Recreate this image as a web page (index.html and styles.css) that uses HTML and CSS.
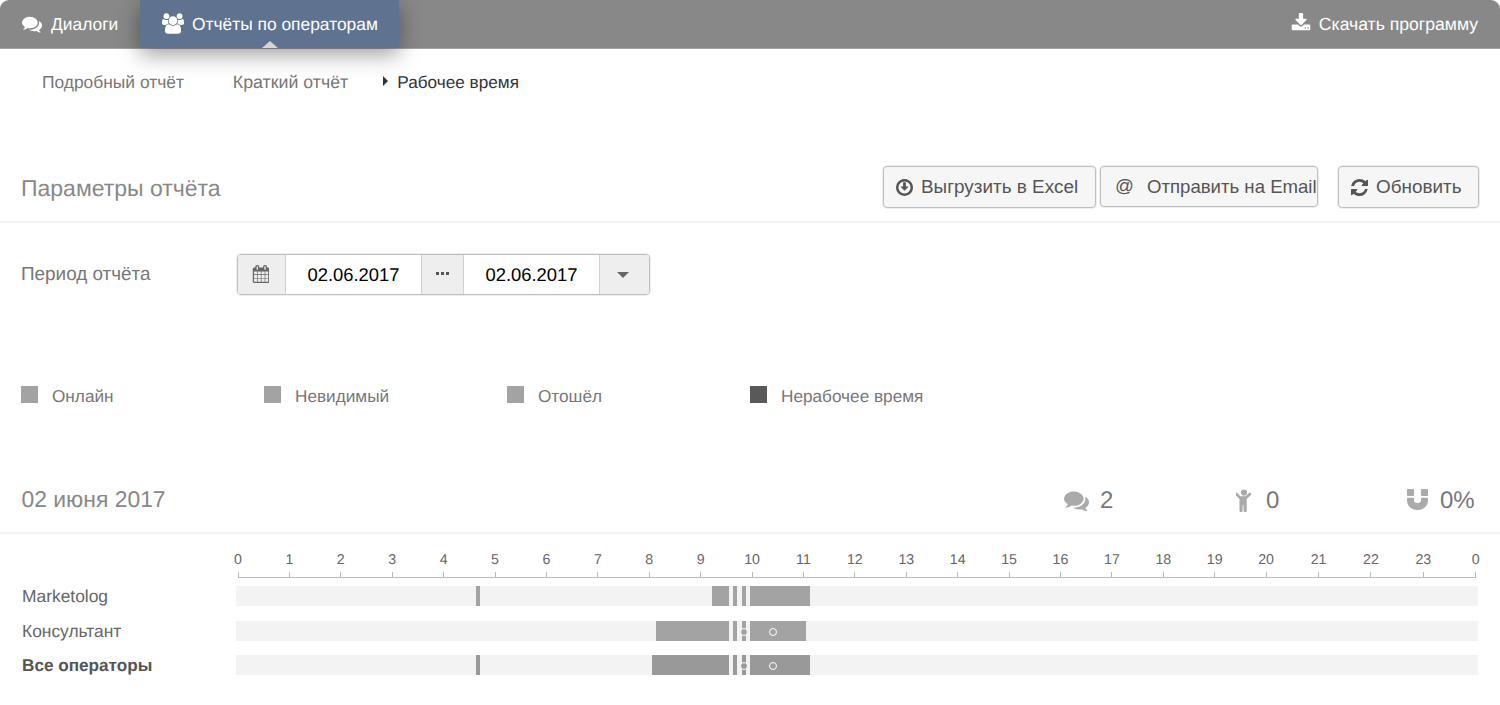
FILE: index.html
```html
<!DOCTYPE html>
<html lang="ru">
<head>
<meta charset="utf-8">
<title>Рабочее время</title>
<link rel="stylesheet" href="styles.css">
</head>
<body>
<header class="topbar">
  <nav class="tabs">
    <a class="tab">
      <svg class="ic ic-comments" viewBox="0 0 1792 1792"><path d="M1408 768q0 139-94 257t-256.500 186.500-353.500 68.500q-86 0-176-16-124 88-278 128-36 9-86 16h-3q-11 0-20.500-8t-11.500-21q-1-3-1-6.500t.5-6.500 2-6l2.500-5 3.500-5.500 4-5 4.500-5 4-4.500q5-6 23-25t26-29.500 22.500-29 25-38.500 20.500-44q-124-72-195-177t-71-224q0-139 94-257t256.500-186.500 353.500-68.500 353.500 68.500 256.500 186.500 94 257zm384 256q0 120-71 224.500t-195 176.500q10 24 20.500 44t25 38.500 22.500 29 26 29.500 23 25q1 1 4 4.500t4.500 5 4 5 3.500 5.500l2.500 5 2 6 .5 6.500-1 6.500q-3 14-13 22t-22 7q-50-7-86-16-154-40-278-128-90 16-176 16-271 0-472-132 58 4 88 4 161 0 309-45t264-129q125-92 192-212t67-254q0-77-23-152 129 71 204 178t75 230z"/></svg>
      Диалоги
    </a>
    <a class="tab tab-active">
      <svg class="ic ic-users" viewBox="0 0 1920 1792"><path d="M593 896q-162 5-265 128h-134q-82 0-138-40.500t-56-118.500q0-353 124-353 6 0 43.500 21t97.500 42.500 119 21.500q67 0 133-23-5 37-5 66 0 139 81 256zm1071 637q0 120-73 189.500t-194 69.500h-874q-121 0-194-69.500t-73-189.500q0-53 3.500-103.500t14-109 26.500-108.500 43-97.500 62-81 85.500-53.500 111.500-20q10 0 43 21.500t73 48 107 48 135 21.500 135-21.500 107-48 73-48 43-21.500q61 0 111.500 20t85.500 53.500 62 81 43 97.500 26.500 108.500 14 109 3.500 103.500zm-1024-1277q0 106-75 181t-181 75-181-75-75-181 75-181 181-75 181 75 75 181zm704 384q0 159-112.500 271.500t-271.500 112.500-271.500-112.500-112.500-271.500 112.500-271.500 271.500-112.500 271.500 112.500 112.500 271.500zm576 225q0 78-56 118.500t-138 40.500h-134q-103-123-265-128 81-117 81-256 0-29-5-66 66 23 133 23 59 0 119-21.500t97.500-42.500 43.500-21q124 0 124 353zm-128-609q0 106-75 181t-181 75-181-75-75-181 75-181 181-75 181 75 75 181z"/></svg>
      Отчёты по операторам
    </a>
  </nav>
  <a class="download">
    <svg class="ic ic-download" viewBox="0 0 1792 1792"><path d="M1344 1344q0-26-19-45t-45-19-45 19-19 45 19 45 45 19 45-19 19-45zm256 0q0-26-19-45t-45-19-45 19-19 45 19 45 45 19 45-19 19-45zm128-224v320q0 40-28 68t-68 28h-1472q-40 0-68-28t-28-68v-320q0-40 28-68t68-28h465l135 136q58 56 136 56t136-56l136-136h464q40 0 68 28t28 68zm-325-569q17 41-14 70l-448 448q-18 19-45 19t-45-19l-448-448q-31-29-14-70 17-39 59-39h256v-448q0-26 19-45t45-19h256q26 0 45 19t19 45v448h256q42 0 59 39z"/></svg>
    Скачать программу
  </a>
</header>

<nav class="subnav">
  <a class="subnav-item">Подробный отчёт</a>
  <a class="subnav-item">Краткий отчёт</a>
  <a class="subnav-item subnav-current">Рабочее время</a>
</nav>

<section class="params-head">
  <h2 class="section-title">Параметры отчёта</h2>
  <div class="actions">
    <button class="btn btn-excel"><svg class="ic ic-btn" viewBox="0 -32 1536 1536"><path d="M1120 672q0 12-10 24l-319 319q-11 9-23 9t-23-9l-320-320q-15-16-7-35 8-20 30-20h192v-352q0-14 9-23t23-9h192q14 0 23 9t9 23v352h192q14 0 23 9t9 23zm-352-480q-148 0-273 73t-198 198-73 273 73 273 198 198 273 73 273-73 198-198 73-273-73-273-198-198-273-73zm768 544q0 209-103 385.500t-279.500 279.500-385.500 103-385.500-103-279.500-279.500-103-385.500 103-385.500 279.500-279.500 385.500-103 385.500 103 279.500 279.500 103 385.500z"/></svg>Выгрузить в Excel</button>
    <button class="btn btn-email"><span class="at">@</span>Отправить на Email</button>
    <button class="btn btn-refresh"><svg class="ic ic-btn" viewBox="128 128 1536 1536"><path d="M1639 1056q0 5-1 7-64 268-268 434.500t-478 166.500q-146 0-282.500-55t-243.500-157l-129 129q-19 19-45 19t-45-19-19-45v-448q0-26 19-45t45-19h448q26 0 45 19t19 45-19 45l-137 137q71 66 161 102t187 36q134 0 250-65t186-179q11-17 53-117 8-23 30-23h192q13 0 22.500 9.500t9.500 22.500zm25-800v448q0 26-19 45t-45 19h-448q-26 0-45-19t-19-45 19-45l138-138q-148-137-349-137-134 0-250 65t-186 179q-11 17-53 117-8 23-30 23h-199q-13 0-22.500-9.500t-9.500-22.500v-7q65-268 270-434.500t480-166.500q146 0 284 55.500t245 156.500l130-129q19-19 45-19t45 19 19 45z"/></svg>Обновить</button>
  </div>
</section>

<section class="period">
  <label class="period-label">Период отчёта</label>
  <div class="range">
    <span class="addon addon-cal"><svg class="ic ic-cal" viewBox="0 0 1664 1792"><path d="M192 1664h288v-288h-288v288zm352 0h320v-288h-320v288zm-352-352h288v-320h-288v320zm352 0h320v-320h-320v320zm-352-384h288v-288h-288v288zm736 736h320v-288h-320v288zm-384-736h320v-288h-320v288zm768 736h288v-288h-288v288zm-384-352h320v-320h-320v320zm-352-864v-288q0-13-9.500-22.500t-22.500-9.500h-64q-13 0-22.500 9.500t-9.500 22.500v288q0 13 9.500 22.500t22.500 9.500h64q13 0 22.500-9.500t9.500-22.500zm736 864h288v-320h-288v320zm-384-384h320v-288h-320v288zm384 0h288v-288h-288v288zm32-480v-288q0-13-9.500-22.500t-22.500-9.500h-64q-13 0-22.500 9.500t-9.500 22.500v288q0 13 9.500 22.500t22.500 9.500h64q13 0 22.500-9.500t9.500-22.500zm384-64v1280q0 52-38 90t-90 38h-1408q-52 0-90-38t-38-90v-1280q0-52 38-90t90-38h128v-96q0-66 47-113t113-47h64q66 0 113 47t47 113v96h384v-96q0-66 47-113t113-47h64q66 0 113 47t47 113v96h128q52 0 90 38t38 90z"/></svg></span>
    <span class="date">02.06.2017</span>
    <span class="addon addon-dots"><i></i><i></i><i></i></span>
    <span class="date">02.06.2017</span>
    <span class="addon addon-caret"><b class="caret-down"></b></span>
  </div>
</section>

<section class="legend">
  <div class="legend-item"><span class="swatch"></span>Онлайн</div>
  <div class="legend-item"><span class="swatch"></span>Невидимый</div>
  <div class="legend-item"><span class="swatch"></span>Отошёл</div>
  <div class="legend-item"><span class="swatch swatch-dark"></span>Нерабочее время</div>
</section>

<section class="day-head">
  <h2 class="day-title">02 июня 2017</h2>
  <div class="stat stat-a"><svg class="ic ic-stat" viewBox="0 0 1792 1792"><path d="M1408 768q0 139-94 257t-256.500 186.500-353.500 68.500q-86 0-176-16-124 88-278 128-36 9-86 16h-3q-11 0-20.500-8t-11.500-21q-1-3-1-6.500t.5-6.500 2-6l2.500-5 3.500-5.500 4-5 4.500-5 4-4.500q5-6 23-25t26-29.500 22.500-29 25-38.500 20.500-44q-124-72-195-177t-71-224q0-139 94-257t256.500-186.500 353.500-68.500 353.500 68.500 256.500 186.500 94 257zm384 256q0 120-71 224.500t-195 176.500q10 24 20.500 44t25 38.500 22.500 29 26 29.500 23 25q1 1 4 4.500t4.500 5 4 5 3.500 5.500l2.500 5 2 6 .5 6.500-1 6.500q-3 14-13 22t-22 7q-50-7-86-16-154-40-278-128-90 16-176 16-271 0-472-132 58 4 88 4 161 0 309-45t264-129q125-92 192-212t67-254q0-77-23-152 129 71 204 178t75 230z"/></svg>2</div>
  <div class="stat stat-b"><svg class="ic ic-child" viewBox="200 128 1008 1632"><path d="M1188 548l-292 292v824q0 46-33 79t-79 33-79-33-33-79v-384h-64v384q0 46-33 79t-79 33-79-33-33-79v-824l-292-292q-28-28-28-68t28-68q29-28 68.500-28t67.500 28l228 228h368l228-228q28-28 68-28t68 28q28 29 28 68.500t-28 67.500zm-260-164q0 93-65.500 158.500t-158.500 65.500-158.500-65.500-65.500-158.500 65.500-158.500 158.500-65.500 158.500 65.500 65.500 158.500z"/></svg>0</div>
  <div class="stat stat-c"><svg class="ic ic-magnet" viewBox="0 128 1536 1536"><path d="M1536 832v128q0 201-98.500 362t-274 251.500-395.500 90.500-395.500-90.500-274-251.500-98.500-362v-128q0-26 19-45t45-19h384q26 0 45 19t19 45v128q0 52 23.500 90t53.500 57 71 30 64 13 44 2 44-2 64-13 71-30 53.500-57 23.500-90v-128q0-26 19-45t45-19h384q26 0 45 19t19 45zm-1024-640v384q0 26-19 45t-45 19h-384q-26 0-45-19t-19-45v-384q0-26 19-45t45-19h384q26 0 45 19t19 45zm1024 0v384q0 26-19 45t-45 19h-384q-26 0-45-19t-19-45v-384q0-26 19-45t45-19h384q26 0 45 19t19 45z"/></svg>0%</div>
</section>

<section class="chart">
  <div class="axis">
    <span class="hour">0</span><span class="hour">1</span><span class="hour">2</span><span class="hour">3</span><span class="hour">4</span><span class="hour">5</span><span class="hour">6</span><span class="hour">7</span><span class="hour">8</span><span class="hour">9</span><span class="hour">10</span><span class="hour">11</span><span class="hour">12</span><span class="hour">13</span><span class="hour">14</span><span class="hour">15</span><span class="hour">16</span><span class="hour">17</span><span class="hour">18</span><span class="hour">19</span><span class="hour">20</span><span class="hour">21</span><span class="hour">22</span><span class="hour">23</span><span class="hour">0</span>
  </div>
  <div class="rows">
    <div class="row">
      <div class="row-label">Marketolog</div>
      <div class="track">
        <span class="seg" style="left:240px;width:4px"></span>
        <span class="seg" style="left:476px;width:17px"></span>
        <span class="seg" style="left:497px;width:4px"></span>
        <span class="seg" style="left:506px;width:4px"></span>
        <span class="seg" style="left:514px;width:60px"></span>
      </div>
    </div>
    <div class="row">
      <div class="row-label">Консультант</div>
      <div class="track">
        <span class="seg" style="left:420px;width:73px"></span>
        <span class="seg" style="left:497px;width:4px"></span>
        <span class="seg" style="left:506px;width:4px"></span>
        <span class="seg" style="left:514px;width:56px"></span>
        <span class="dot dot-solid" style="left:504px"></span>
        <span class="dot" style="left:533px"></span>
      </div>
    </div>
    <div class="row">
      <div class="row-label row-total">Все операторы</div>
      <div class="track track-total">
        <span class="seg" style="left:240px;width:4px"></span>
        <span class="seg" style="left:416px;width:77px"></span>
        <span class="seg" style="left:497px;width:4px"></span>
        <span class="seg" style="left:506px;width:4px"></span>
        <span class="seg" style="left:514px;width:60px"></span>
        <span class="dot dot-solid" style="left:504px"></span>
        <span class="dot" style="left:533px"></span>
      </div>
    </div>
  </div>
</section>
</body>
</html>
```

FILE: styles.css
```css
* { box-sizing: border-box; }
html, body { margin: 0; padding: 0; }
body {
  width: 1500px;
  height: 705px;
  overflow: hidden;
  background: #fff;
  font-family: "Liberation Sans", Arial, sans-serif;
  font-size: 17.4px;
  text-rendering: geometricPrecision;
  color: #666;
}
.ic { display: block; fill: currentColor; flex: none; }

/* top bar */
.topbar {
  height: 49px;
  background: #888;
  border-bottom: 1px solid #a3a3a3;
  border-radius: 9px 9px 0 0;
  display: flex;
  justify-content: space-between;
  color: #fff;
}
.tabs { display: flex; }
.tab {
  display: flex;
  align-items: center;
  height: 48px;
  padding-top: 1px;
  color: #fff;
  font-size: 17.4px;
  white-space: nowrap;
}
.tab:first-child { width: 140px; padding-left: 22px; }
.ic-comments { width: 20px; height: 20px; margin-right: 9px; margin-top: -2px; }
.tab-active {
  position: relative;
  z-index: 2;
  width: 259px;
  padding-left: 22px;
  background: #5f7390;
  box-shadow: 0 6px 22px rgba(0, 0, 0, .4);
}
.tab-active::after {
  content: "";
  position: absolute;
  left: 122px;
  bottom: 0;
  border: 8px solid transparent;
  border-top: 0;
  border-bottom: 7px solid #d6d6d6;
}
.ic-users { width: 22px; height: 21px; margin-right: 8px; margin-top: -3px; }
.download {
  display: flex;
  align-items: center;
  height: 48px;
  padding-top: 1px;
  padding-right: 22px;
  color: #fff;
  font-size: 17.6px;
}
.ic-download { width: 20px; height: 20px; margin-right: 8px; margin-top: -3px; }

/* sub navigation */
.subnav {
  display: flex;
  align-items: center;
  height: 67px;
  padding-left: 42px;
  gap: 49px;
  color: #777;
}
.subnav-current { position: relative; margin-left: -14px; padding-left: 14px; color: #333; }
.subnav-item:nth-child(2) { font-size: 17.8px; }
.subnav-current { font-size: 17.2px; }
.subnav-current::before {
  content: "";
  position: absolute;
  left: 0;
  top: 4px;
  border: 5.5px solid transparent;
  border-left: 5.5px solid #333;
  border-right: 0;
}

/* parameters header */
.params-head {
  margin-top: 50px;
  padding: 0 21px 13px 21px;
  border-bottom: 2px solid #f3f3f3;
  display: flex;
  justify-content: space-between;
  align-items: center;
}
.section-title { margin: 2px 0 0; font-size: 23px; font-weight: 400; color: #888; }
.actions { display: flex; align-items: flex-start; }
.btn {
  display: flex;
  align-items: center;
  height: 42px;
  padding: 0;
  background: #f6f6f6;
  border: 1px solid #bfbfbf;
  border-radius: 4px;
  box-shadow: 0 0 0 1px rgba(200, 200, 200, .3);
  color: #555;
  font: 18.9px "Liberation Sans", Arial, sans-serif;
  text-align: left;
  white-space: nowrap;
}
.btn-excel { width: 213px; padding-left: 12px; margin-right: 4px; }
.btn-email { width: 218px; height: 41px; padding-left: 14px; margin-right: 20px; font-size: 18.6px; }
.btn-refresh { width: 141px; padding-left: 12px; }
.ic-btn { width: 17px; height: 17px; margin-right: 8px; }
.at { width: 32px; flex: none; margin-top: -2px; }

/* period */
.period {
  margin-top: 31px;
  padding-left: 21px;
  display: flex;
  align-items: center;
}
.period-label { width: 216px; font-size: 18.9px; color: #777; padding-top: 1px; }
.range {
  display: flex;
  height: 41px;
  width: 413px;
  border: 1px solid #bfbfbf;
  border-radius: 4px;
  box-shadow: 0 0 0 1px rgba(200, 200, 200, .3);
  overflow: hidden;
}
.addon {
  display: flex;
  align-items: center;
  justify-content: center;
  background: #eee;
  color: #666;
}
.addon-cal { width: 48px; padding-right: 2px; border-right: 1px solid #d0d0d0; }
.ic-cal { width: 17px; height: 18px; margin-top: -2px; }
.date {
  width: 135px;
  display: flex;
  align-items: center;
  justify-content: center;
  padding-top: 1px;
  background: #fff;
  color: #000;
  font-size: 18.4px;
}
.addon-dots { width: 43px; gap: 2px; padding-bottom: 2px; border-left: 1px solid #d0d0d0; border-right: 1px solid #d0d0d0; }
.addon-dots i { width: 3px; height: 3px; background: #555; display: block; }
.addon-caret { width: 50px; padding-right: 4px; border-left: 1px solid #d0d0d0; }
.caret-down {
  display: block;
  border: 6px solid transparent;
  border-bottom: 0;
  border-top: 6px solid #666;
}

/* legend */
.legend {
  margin-top: 90px;
  height: 20px;
  padding-left: 21px;
  display: flex;
  color: #777;
  font-size: 17.2px;
}
.legend-item { width: 243px; display: flex; align-items: center; padding-top: 2px; white-space: nowrap; }
.swatch { width: 17px; height: 17px; margin-right: 14px; margin-top: -4px; background: #a3a3a3; }
.swatch-dark { background: #595959; }

/* day header */
.day-head {
  margin-top: 79px;
  height: 50px;
  padding-bottom: 18px;
  padding-top: 1px;
  border-bottom: 2px solid #f3f3f3;
  display: flex;
  align-items: center;
}
.day-title { margin: 0 0 0 21.5px; width: 1042.5px; font-size: 22.9px; font-weight: 400; color: #888; }
.stat { display: flex; align-items: center; margin-top: 2px; font-size: 24px; color: #777; }
.stat-a { width: 172px; }
.stat-b { width: 171px; }
.ic-stat { width: 25px; height: 25px; margin-right: 11px; color: #aaa; }
.ic-child { width: 16px; height: 23px; margin-right: 14px; color: #aaa; }
.ic-magnet { width: 21px; height: 21px; margin-right: 12px; color: #aaa; margin-top: -2px; }

/* chart */
.axis {
  position: relative;
  margin: 18px 0 0 228px;
  display: flex;
}
.axis::after {
  content: "";
  position: absolute;
  left: 10px;
  width: 1238px;
  bottom: 0;
  height: 1px;
  background: #bbb;
}
.hour {
  flex: none;
  width: 20px;
  height: 26px;
  margin-right: 31.42px;
  text-align: center;
  font-size: 14.2px;
  line-height: 16px;
  color: #666;
  background: linear-gradient(#bbb, #bbb) center bottom / 1px 6px no-repeat;
}
.hour:nth-child(n+21) { margin-right: 32.4px; }
.rows { margin-top: 8px; display: flex; flex-direction: column; gap: 14.5px; }
.row { display: flex; height: 20px; align-items: center; }
.row-label { width: 236px; padding-left: 22px; padding-top: 1px; }
.row-total { font-weight: 700; color: #555; font-size: 17.15px; }
.track { position: relative; width: 1242px; height: 20px; background: #f3f3f3; }
.seg {
  position: absolute;
  top: 0;
  bottom: 0;
  background: #a3a3a3;
}
.track-total .seg { background: #999; }
.dot {
  position: absolute;
  top: 7px;
  width: 8px;
  height: 8px;
  border: 1.5px solid #fff;
  border-radius: 50%;
}
.dot-solid { background: #a3a3a3; }
.track-total .dot-solid { background: #999; }
```
